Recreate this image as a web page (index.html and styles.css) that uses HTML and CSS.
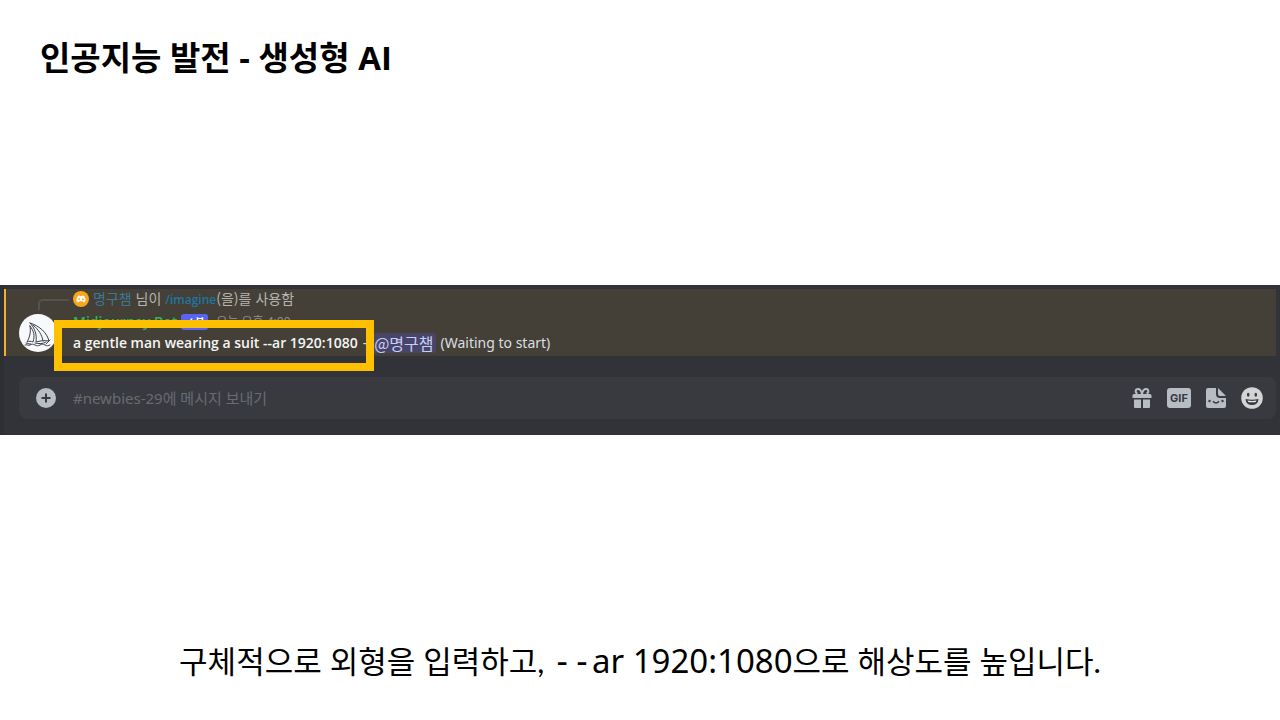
FILE: index.html
```html
<!DOCTYPE html>
<html lang="ko">
<head>
<meta charset="utf-8">
<meta name="viewport" content="width=device-width, initial-scale=1">
<title>인공지능 발전 - 생성형 AI</title>
<link rel="stylesheet" href="styles.css">
</head>
<body>
<main class="slide">
  <h1 class="title">인공지능 발전 - 생성형 AI</h1>

  <section class="chat">
    <article class="message">
      <svg class="avatar" viewBox="0 0 38 38" aria-hidden="true">
        <circle cx="19" cy="19" r="19" fill="#f8f9fb"/>
        <g fill="none" stroke="#3a3f4b" stroke-width="1" stroke-linecap="round" stroke-linejoin="round">
          <path d="M11 9c10 3 17 10 19 18-5-1-9 0-13 1 1-7-1-14-6-19z"/>
          <path d="M11 12c1 5 0 11-3 16 2-1 4-1 6 0 2-6 1-11-3-16z"/>
          <path d="M14 11c6 5 9 10 10 16"/>
          <path d="M7 29c2 1 4 1 5 1M31 26l-4 4M16 29c4 1 8 1 11-1"/>
          <path d="M6 31c2-1 3 1 5 0s3-1 5 0 3 1 5 0 3-1 5 0 3 1 5 0"/>
        </g>
      </svg>
      <div class="spine" aria-hidden="true"></div>
      <div class="body">
        <p class="reply">
          <svg class="mini" viewBox="0 0 16 16" aria-hidden="true">
            <circle cx="8" cy="8" r="8" fill="#faa61a"/>
            <path d="M4.700 5.200Q6 4.500 6.700 4.600L7 5.100h2l.3-.5q.7-.1 2 .6 1.500 2.500 1.300 5-1 .9-2.300 1l-.6-.9H6.300l-.6.900q-1.300-.1-2.300-1-.2-2.500 1.300-5z" fill="#fff"/>
            <circle cx="6.200" cy="8.200" r=".9" fill="#faa61a"/><circle cx="9.800" cy="8.200" r=".9" fill="#faa61a"/>
          </svg>
          <span><a class="user" href="#">명구챔</a> 님이 <a class="command" href="#">/imagine</a>(을)를 사용함</span>
        </p>
        <p class="author"><strong class="name">Midjourney Bot</strong><span class="tag">✓ 봇</span><time class="time">오늘 오후 4:00</time></p>
        <p class="prompt"><strong>a gentle man wearing a suit --ar 1920:1080</strong> <span>-</span> <a class="mention" href="#">@명구챔</a> <span>(Waiting to start)</span></p>
      </div>
      <div class="frame" aria-hidden="true"></div>
    </article>

    <form class="composer">
      <button class="icon" type="button" aria-label="추가">
        <svg width="20" height="20" viewBox="0 0 20 20"><circle cx="10" cy="10" r="10" fill="#b8bcc3"/><path d="M10 5.500v9M5.500 10h9" stroke="#383a40" stroke-width="2"/></svg>
      </button>
      <input class="field" type="text" aria-label="메시지" placeholder="#newbies-29에 메시지 보내기">
      <div class="tools">
        <button class="icon" type="button" aria-label="선물">
          <svg width="20" height="20" viewBox="0 0 20 20"><path d="M2 6h16q1.500 0 1.500 1.500V10H.5V7.500Q.5 6 2 6zM2 11.500h7V20H3q-1 0-1-1zM11 11.500h7V19q0 1-1 1h-6z" fill="#b8bcc3"/><path d="M10 6Q9 1 6 1C3 1 3 5 5.500 5.500M10 6q1-5 4-5c3 0 3 4 .5 4.500" fill="none" stroke="#b8bcc3" stroke-width="2"/></svg>
        </button>
        <button class="icon" type="button" aria-label="GIF"><span class="gif">GIF</span></button>
        <button class="icon" type="button" aria-label="스티커">
          <svg width="20" height="20" viewBox="0 0 20 20"><path d="M2 0h8v6q0 4 4 4h6v8q0 2-2 2H2q-2 0-2-2V2Q0 0 2 0z" fill="#b8bcc3"/><path d="M12 0l8 8h-6q-2 0-2-2z" fill="#b8bcc3"/><circle cx="3.500" cy="13" r="1.200" fill="#383a40"/><circle cx="16.500" cy="13" r="1.200" fill="#383a40"/><path d="M7 13.200q3 3.600 6 0" fill="none" stroke="#383a40" stroke-width="1.600"/></svg>
        </button>
        <button class="icon" type="button" aria-label="이모지">
          <svg width="22" height="22" viewBox="0 0 22 22"><circle cx="11" cy="11" r="10.800" fill="#d4d4d5"/><ellipse cx="7.200" cy="7.800" rx="1.300" ry="2" fill="#383a40"/><ellipse cx="14.800" cy="7.800" rx="1.300" ry="2" fill="#383a40"/><path d="M4.500 12q6.500 1.500 13 0-.5 6-6.500 6t-6.500-6z" fill="#383a40"/><path d="M6.500 13.500q4.500.8 9 0-.5 1.800-1.500 1.800H8q-1 0-1.500-1.800z" fill="#e6e6e6"/></svg>
        </button>
      </div>
    </form>
  </section>

  <p class="caption">구체적으로 외형을 입력하고, <span class="option"><span class="flag">--</span>ar 1920:1080</span>으로 해상도를 높입니다.</p>
</main>
</body>
</html>
```
FILE: styles.css
```css
* {
  box-sizing: border-box;
}

body {
  margin: 0;
  background: #fff;
  color: #000;
  font-family: "Noto Sans", "Noto Sans CJK KR", sans-serif;
}

h1,
p {
  margin: 0;
}

a {
  color: inherit;
  text-decoration: none;
}

.slide {
  min-height: 100vh;
  display: grid;
  grid-template-rows: 1fr auto 1fr;
}

.title {
  padding: 34px 40px;
  font-family: "Open Sans", "Noto Sans CJK KR", sans-serif;
  font-size: 33px;
  line-height: 48px;
  font-weight: 700;
}

.chat {
  padding: 4px 4px 16px 0;
  border-left: 4px solid #2d2f34;
  background: #313338;
  color: #dbdee1;
}

.message {
  position: relative;
  display: flex;
  gap: 16px;
  padding: 0 13px;
  border-left: 2px solid #f0b132;
  background: #444037;
}

.avatar {
  flex: none;
  width: 38px;
  height: 38px;
  margin-top: 25px;
}

.spine {
  position: absolute;
  left: 32px;
  top: 10px;
  width: 31px;
  height: 11px;
  border: solid #56534e;
  border-width: 2px 0 0 2px;
  border-top-left-radius: 5px;
}

.body {
  display: flex;
  flex-direction: column;
}

.reply {
  display: flex;
  align-items: center;
  gap: 4px;
  height: 20px;
  color: #b5b5b3;
  font-family: "Noto Sans CJK KR", sans-serif;
  font-size: 14px;
  line-height: 20px;
}

.mini {
  width: 16px;
  height: 16px;
}

.user {
  color: #3b7896;
}

.command {
  color: #1c76a5;
  font-family: "Open Sans", sans-serif;
  font-size: 12px;
  font-weight: 600;
}

.author {
  display: flex;
  align-items: center;
  gap: 4px;
  padding-top: 2px;
  font-size: 14px;
  line-height: 22px;
}

.name {
  color: #2eb45c;
  font-family: "Open Sans", sans-serif;
  font-weight: 600;
}

.tag {
  padding: 0 4px;
  border-radius: 3px;
  background: #5865f2;
  color: #fff;
  font-size: 10px;
  line-height: 16px;
  font-weight: 700;
}

.time {
  margin-left: 4px;
  color: #949087;
  font-size: 12px;
}

.prompt {
  display: flex;
  align-items: center;
  gap: 5px;
  font-size: 14px;
  line-height: 20px;
  padding-bottom: 3px;
}

.prompt strong {
  color: #f5f5f5;
  font-family: "Open Sans", sans-serif;
  font-weight: 600;
}

.mention {
  padding: 0 2px;
  border-radius: 3px;
  background: #484568;
  color: #c9cdfb;
  font-family: "Noto Sans CJK KR", sans-serif;
  font-size: 16px;
}

.frame {
  position: absolute;
  left: 48px;
  top: 31px;
  width: 320px;
  height: 51px;
  border: 8px solid #ffc000;
}

.composer {
  display: flex;
  align-items: center;
  gap: 17px;
  height: 42px;
  margin: 21px 0 0 15px;
  padding: 0 13px 0 17px;
  border-radius: 8px;
  background: #383a40;
}

.icon {
  display: flex;
  padding: 0;
  border: 0;
  background: none;
}

.field {
  flex: 1;
  min-width: 0;
  padding: 0;
  border: 0;
  outline: 0;
  background: none;
  color: #dbdee1;
  font: 15px/22px "Noto Sans", "Noto Sans CJK KR", sans-serif;
}

.field::placeholder {
  color: #686b72;
  opacity: 1;
}

.tools {
  display: flex;
  align-items: center;
  gap: 15px;
}

.gif {
  width: 24px;
  border-radius: 3px;
  background: #b8bcc3;
  color: #383a40;
  font-family: Inter, sans-serif;
  font-size: 11px;
  line-height: 20px;
  font-weight: 700;
  text-align: center;
}

.caption {
  align-self: end;
  padding: 0 40px 34px;
  font-family: Lato, "Noto Sans CJK KR", sans-serif;
  font-size: 31px;
  line-height: 48px;
  text-align: center;
}

.option {
  font-family: "Noto Sans", sans-serif;
  font-size: 33px;
}

.flag {
  font-family: "DejaVu Sans Mono", monospace;
}
```
